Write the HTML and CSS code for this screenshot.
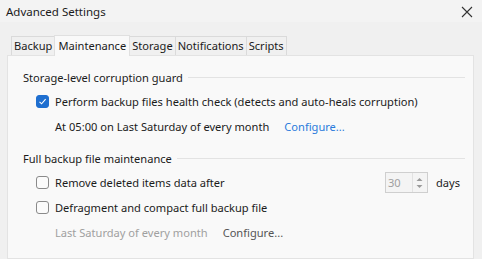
FILE: index.html
```html
<!DOCTYPE html>
<html lang="en">
<head>
    <meta charset="UTF-8">
    <title>Advanced Settings</title>
    <link rel="stylesheet" href="styles.css">
</head>
<body>
    <div class="window">
        <div class="titlebar">
            <span class="title">Advanced Settings</span>
            <svg class="close" width="12" height="12" viewBox="0 0 12 12">
                <path d="M1 1 L11 11 M11 1 L1 11" stroke="#333" stroke-width="1.1" fill="none"/>
            </svg>
        </div>

        <div class="tabs">
            <div class="tab">Backup</div>
            <div class="tab active">Maintenance</div>
            <div class="tab">Storage</div>
            <div class="tab">Notifications</div>
            <div class="tab">Scripts</div>
        </div>

        <div class="panel">
            <div class="group">
                <div class="group-header"><span>Storage-level corruption guard</span></div>
                <label class="row">
                    <span class="check checked">
                        <svg width="9" height="9" viewBox="0 0 9 9"><path d="M1.5 4.8 L3.6 6.8 L7.6 2.2" stroke="#fff" stroke-width="1.1" fill="none"/></svg>
                    </span>
                    Perform backup files health check (detects and auto-heals corruption)
                </label>
                <div class="row sub">
                    At 05:00 on Last Saturday of every month
                    <a class="link">Configure...</a>
                </div>
            </div>

            <div class="group">
                <div class="group-header"><span>Full backup file maintenance</span></div>
                <div class="row spread">
                    <label class="row-inner">
                        <span class="check"></span>
                        Remove deleted items data after
                    </label>
                    <div class="spin-wrap">
                        <div class="spin">
                            <span class="spin-value">30</span>
                            <span class="spin-arrows">
                                <svg width="7" height="14" viewBox="0 0 7 14">
                                    <path d="M0.5 5 L3.5 2 L6.5 5 Z" fill="#9a9a9a"/>
                                    <path d="M0.5 9 L3.5 12 L6.5 9 Z" fill="#9a9a9a"/>
                                </svg>
                            </span>
                        </div>
                        <span>days</span>
                    </div>
                </div>
                <label class="row">
                    <span class="check"></span>
                    Defragment and compact full backup file
                </label>
                <div class="row sub">
                    <span class="muted">Last Saturday of every month</span>
                    <a class="link-dim">Configure...</a>
                </div>
            </div>
        </div>
    </div>
</body>
</html>
```

FILE: styles.css
```css
:root {
    --color-bg: #f0f0f0;
    --color-panel: #f9f9f9;
    --color-border: #e3e3e3;
    --color-text: #1b1b1b;
    --color-accent: #1f6fd0;
}

* {
    box-sizing: border-box;
}

body {
    margin: 0;
    font-family: 'Noto Sans', 'Open Sans', sans-serif;
    font-size: 11.1px;
    color: var(--color-text);
    background: var(--color-bg);
}

.window {
    width: 482px;
    height: 259px;
    overflow: hidden;
    display: flex;
    flex-direction: column;
}

.titlebar {
    height: 22px;
    padding: 0 9px 0 6px;
    display: flex;
    align-items: center;
    justify-content: space-between;
    background: #f3f3f3;
}

.title {
    font-size: 11.5px;
}

.close {
    margin-top: 2px;
}

.tabs {
    display: flex;
    align-items: flex-end;
    height: 33px;
    padding-left: 11px;
}

.tab {
    height: 19px;
    padding: 0 2px;
    line-height: 18px;
    background: #f0f0f0;
    border: 1px solid #dadada;
    border-bottom: none;
    margin-right: -1px;
}

.tab.active {
    height: 21px;
    line-height: 20px;
    padding: 0 3px;
    background: var(--color-panel);
    position: relative;
    z-index: 1;
    margin-bottom: -1px;
    border-color: #e0e0e0;
}

.panel {
    flex: 1;
    margin: 0 8px 0 7px;
    background: var(--color-panel);
    border: 1px solid var(--color-border);
    padding: 13px 8px 0 15px;
}

.group {
    margin-bottom: 11px;
}

.group-header {
    display: flex;
    align-items: center;
    gap: 5px;
    height: 16px;
    margin-bottom: 4px;
}

.group-header::after {
    content: "";
    flex: 1;
    height: 1px;
    background: #e3e3e3;
}

.row {
    display: flex;
    align-items: center;
    height: 25px;
    padding-left: 13px;
}

.row.sub {
    padding-left: 32px;
    gap: 15px;
}

.row.spread {
    justify-content: space-between;
    padding-right: 5px;
}

.row-inner {
    display: flex;
    align-items: center;
}

.check {
    width: 13px;
    height: 13px;
    border: 1px solid #8a8a8a;
    border-radius: 3px;
    background: #fbfbfb;
    margin-right: 6px;
    display: flex;
    align-items: center;
    justify-content: center;
}

.check.checked {
    background: var(--color-accent);
    border-color: var(--color-accent);
}

.link {
    color: #2a7bdc;
}

.muted {
    color: #a0a0a0;
}

.link-dim {
    color: #555;
}

.spin-wrap {
    display: flex;
    align-items: center;
    gap: 8px;
}

.spin {
    width: 43px;
    height: 21px;
    border: 1px solid #cfcfcf;
    background: #f4f4f4;
    display: flex;
    align-items: center;
    justify-content: space-between;
}

.spin-value {
    color: #a0a0a0;
    padding-left: 2px;
}

.spin-arrows {
    width: 15px;
    height: 19px;
    border-left: 1px solid #e2e2e2;
    display: flex;
    align-items: center;
    justify-content: center;
}
```
